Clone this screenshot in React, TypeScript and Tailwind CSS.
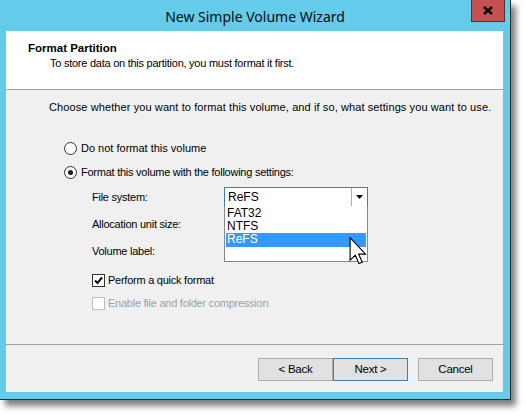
import React from "react";

const body = { fontFamily: '"Liberation Sans", Arial, sans-serif' };

function Radio({ checked }: { checked?: boolean }) {
  return (
    <span className="w-[13px] h-[13px] rounded-full border border-[#333] bg-white flex items-center justify-center shrink-0">
      {checked && <span className="w-[5px] h-[5px] rounded-full bg-[#1a1a1a]" />}
    </span>
  );
}

function Check({ checked, disabled }: { checked?: boolean; disabled?: boolean }) {
  return (
    <span
      className={
        disabled
          ? "w-[13px] h-[13px] border border-[#bcbcbc] bg-white shrink-0"
          : "w-[13px] h-[13px] border border-[#333] bg-white shrink-0 flex items-center justify-center"
      }
    >
      {checked && (
        <svg width="9" height="9" viewBox="0 0 9 9">
          <path d="M1 4.5 L3.5 7 L8 1.5" stroke="#000" strokeWidth="2" fill="none" />
        </svg>
      )}
    </span>
  );
}

function Btn({ label, focused }: { label: string; focused?: boolean }) {
  return (
    <div
      className={
        "w-[75px] h-[23px] flex items-center justify-center text-[11.5px] text-black bg-[#e1e1e1] border " +
        (focused ? "border-[#3c7fb1]" : "border-[#adadad]")
      }
    >
      {label}
    </div>
  );
}

export default function App() {
  return (
    <div className="w-[526px] h-[415px] bg-white" style={body}>
      <div className="w-[511px] h-[400px] bg-[#65cbeb] border-r border-b border-[#2b2b2b] shadow-[5px_6px_6px_rgba(0,0,0,0.5)] flex flex-col">
        {/* title bar */}
        <div className="h-[31px] relative flex items-center justify-center">
          <span
            className="text-[14px] text-[#0a0a0a] mt-[1px]"
            style={{ fontFamily: '"Noto Sans", "Open Sans", sans-serif' }}
          >
            New Simple Volume Wizard
          </span>
          <div className="absolute left-[471px] top-0 w-[34px] h-[22px] bg-[#c75050] border border-t-0 border-[#3c3c3c] flex items-center justify-center">
            <svg width="10" height="9" viewBox="0 0 10 9">
              <path d="M1 1 L9 8 M9 1 L1 8" stroke="#000" strokeWidth="2.4" />
            </svg>
          </div>
        </div>
        {/* client */}
        <div className="ml-[6px] w-[497px] h-[361px] bg-[#f0f0f0] flex flex-col text-[11px] tracking-[-0.25px] text-black">
          <div className="h-[59px] bg-white pt-[10px] border-b border-[#a0a0a0] flex flex-col">
            <div className="pl-[22px] font-bold leading-[14px] text-[11.5px] tracking-normal">Format Partition</div>
            <div className="pl-[44px] leading-[14px] mt-[1px]">
              To store data on this partition, you must format it first.
            </div>
          </div>
          <div className="h-[255px] border-b border-[#a0a0a0] relative flex flex-col">
            <div className="pl-[43px] mt-[10px] leading-[14px] whitespace-nowrap tracking-[0.1px]">
              Choose whether you want to format this volume, and if so, what settings you want to use.
            </div>
            <div className="pl-[58px] mt-[27px] flex items-center gap-[4px] leading-[14px]">
              <Radio />
              <span className="tracking-normal">Do not format this volume</span>
            </div>
            <div className="pl-[58px] mt-[10px] flex items-center gap-[4px] leading-[14px]">
              <Radio checked />
              <span>Format this volume with the following settings:</span>
            </div>
            <div className="pl-[86px] mt-[8px] flex items-center leading-[14px]">
              <span className="w-[132px]">File system:</span>
              <div className="w-[144px] h-[20px] border border-[#3c7fb1] bg-white flex text-[12px] tracking-normal">
                <span className="flex-1 pl-[3px] flex items-center">ReFS</span>
                <span className="w-[16px] border-l border-[#adadad] flex items-center justify-center">
                  <svg width="7" height="4" viewBox="0 0 7 4">
                    <path d="M0 0 H7 L3.5 4 Z" fill="#000" />
                  </svg>
                </span>
              </div>
            </div>
            <div className="pl-[86px] mt-[10px] leading-[14px]">Allocation unit size:</div>
            <div className="pl-[86px] mt-[13px] leading-[14px]">Volume label:</div>
            <div className="pl-[86px] mt-[15px] flex items-center gap-[3px] leading-[14px]">
              <Check checked />
              <span>Perform a quick format</span>
            </div>
            <div className="pl-[86px] mt-[9px] flex items-center gap-[3px] leading-[14px] text-[#a0a0a0]">
              <Check disabled />
              <span>Enable file and folder compression</span>
            </div>

            {/* dropdown list */}
            <div className="absolute left-[218px] top-[116px] w-[144px] h-[56px] bg-white border border-[#828790] border-t-0 flex flex-col pt-[1px] text-[12px] tracking-normal leading-[13px]">
              <div className="pl-[2px] h-[13px]">FAT32</div>
              <div className="pl-[2px] h-[13px]">NTFS</div>
              <div className="bg-[#3399ff] text-white mx-[1px] pl-[1px] h-[14px]">ReFS</div>
            </div>
            {/* cursor */}
            <svg className="absolute left-[343px] top-[147px]" width="19" height="28" viewBox="0 0 13 20">
              <path
                d="M0.5 0.5 L0.5 16.5 L4.2 13 L6.8 19 L9.2 18 L6.6 12.2 L11.5 12.2 Z"
                fill="#fff"
                stroke="#000"
                strokeWidth="0.8"
                strokeLinejoin="miter"
              />
            </svg>
          </div>
          <div className="flex-1 flex pt-[13px] pl-[252px]">
            <Btn label="< Back" />
            <Btn label="Next >" focused />
            <div className="w-[10px]" />
            <Btn label="Cancel" />
          </div>
        </div>
      </div>
    </div>
  );
}
